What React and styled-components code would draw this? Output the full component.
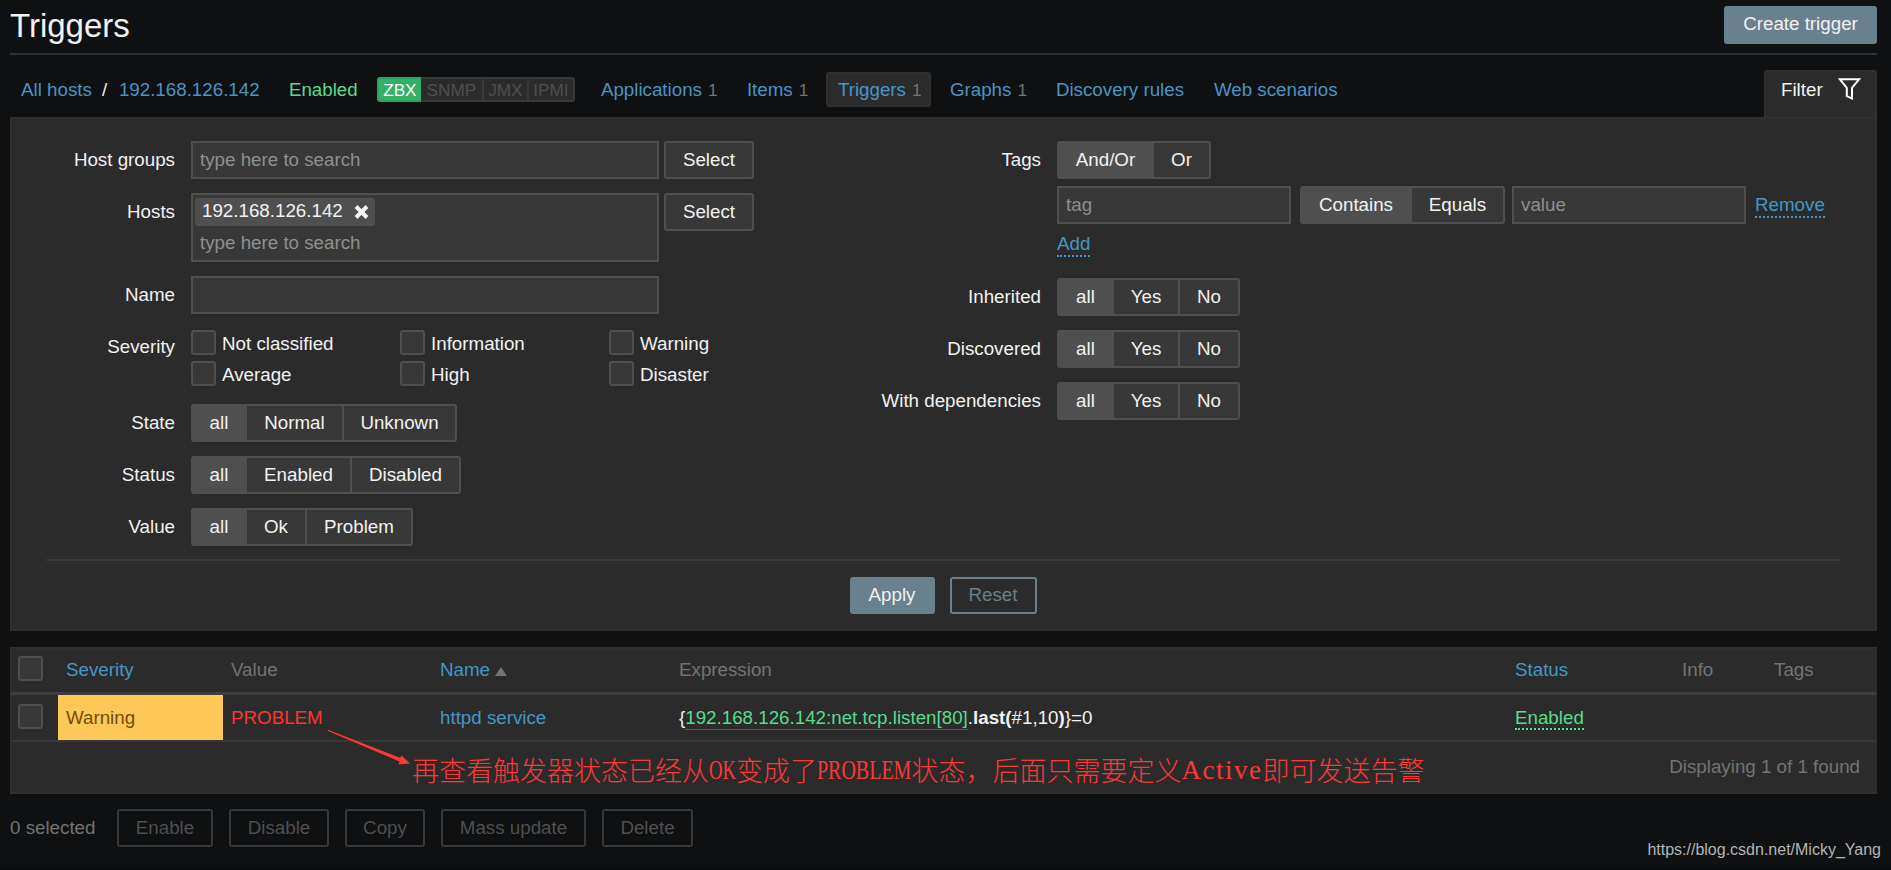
import React from 'react';
import styled, { createGlobalStyle, css } from 'styled-components';

const GlobalStyle = createGlobalStyle`
  *, *::before, *::after { box-sizing: border-box; }
  body {
    margin: 0;
    background: #0e1012;
    color: #f2f2f2;
    font: 18.75px/22px "Liberation Sans", Arial, sans-serif;
    overflow: hidden;
  }
  button, input { font: inherit; color: inherit; margin: 0; }
`;

const Page = styled.div`
  position: relative;
  height: 870px;
  padding: 0 14px 0 10px;
  border-bottom: 1px solid #070a0c;
`;

const Header = styled.header`
  display: flex;
  justify-content: space-between;
  align-items: flex-start;
  height: 55px;
  padding-top: 6px;
  border-bottom: 2px solid #303030;
`;

const Title = styled.h1`
  margin: 1px 0 0;
  font-size: 33px;
  line-height: 38px;
  font-weight: 400;
`;

const Button = styled.button`
  width: ${(p) => p.$w}px;
  height: ${(p) => p.$h || 38}px;
  padding: ${(p) => (p.$kind === 'primary' || p.$kind === 'outline' ? '0 0 2px' : '0')};
  border: 2px solid #4f4f4f;
  border-radius: 3px;
  background: #383838;
  color: #f2f2f2;
  white-space: nowrap;
  ${(p) => p.$kind === 'primary' && css`background: #69808d; border-color: #69808d;`}
  ${(p) => p.$kind === 'outline' && css`background: transparent; border-color: #69808d; color: #69808d;`}
  ${(p) => p.$kind === 'disabled' && css`background: transparent; border-color: #383838; color: #4f4f4f;`}
`;

const NavRow = styled.nav`
  display: flex;
  justify-content: space-between;
  align-items: flex-end;
  height: 62px;
`;

const NavItems = styled.div`
  display: flex;
  align-items: center;
  height: 45px;
  margin-bottom: 5px;
  padding-left: 11px;
`;

const Link = styled.a`
  color: #4796c4;
  white-space: nowrap;
  ${(p) => p.$dotted && css`
    margin-top: 2px;
    border-bottom: 2px dotted #4796c4;
  `}
`;

const Slash = styled.span`
  width: 27px;
  padding-left: 10px;
`;

const Crumb = styled.span`
  width: ${(p) => p.$w}px;
  color: ${(p) => p.$color || 'inherit'};
  white-space: nowrap;
`;

const Interfaces = styled.div`
  display: flex;
  width: 198px;
  height: 25px;
  margin-right: 14px;
  font-size: 17.2px;
  line-height: 21px;
`;

const Interface = styled.span`
  width: ${(p) => p.$w}px;
  padding-top: 1px;
  text-align: center;
  color: #4f4f4f;
  background: #2b2b2b;
  border: 2px solid #383838;
  border-left-width: 0;
  &:last-child { border-radius: 0 3px 3px 0; }
  ${(p) => p.$on && css`
    color: #fff;
    background: #34af67;
    border: 2px solid #2f9f5e;
    border-right: 0;
    border-radius: 3px 0 0 3px;
  `}
`;

const Tab = styled.a`
  width: ${(p) => p.$w}px;
  height: 35px;
  padding: 5px 0 0 10px;
  border: 2px solid transparent;
  border-radius: 3px;
  color: #4796c4;
  white-space: nowrap;
  ${(p) => p.$active && css`
    margin-right: 7px;
    background: #2b2b2b;
    border-color: #303030;
  `}
`;

const Count = styled.sup`
  margin-left: 6px;
  font-size: 17.2px;
  line-height: 1;
  vertical-align: baseline;
  color: #737373;
`;

const FilterTab = styled.div`
  display: flex;
  justify-content: space-between;
  width: 113px;
  height: 47px;
  padding: 7px 14px 0 15px;
  background: #2b2b2b;
  border: 2px solid #303030;
  border-bottom: 0;
  border-radius: 3px 3px 0 0;
`;

const FilterIcon = styled.svg`
  display: block;
  width: 23px;
  height: 22px;
  margin-top: -1px;
`;

const FilterPanel = styled.section`
  height: 514px;
  padding: 22px 35px 0 34px;
  background: #2b2b2b;
  border: 2px solid #303030;
`;

const FilterColumns = styled.div`
  display: grid;
  grid-template-columns: 866px 1fr;
  height: 420px;
  border-bottom: 2px solid #383838;
`;

const Form = styled.div`
  display: flex;
  flex-direction: column;
  gap: 14px;
`;

const Field = styled.div`
  display: flex;
  align-items: flex-start;
  height: ${(p) => p.$h || 38}px;
`;

const Label = styled.label`
  flex: none;
  width: ${(p) => p.$w}px;
  margin-right: 16px;
  padding-top: 8px;
  text-align: right;
`;

const WideLabel = styled(Label)`
  width: 170px;
  margin-left: -41px;
`;

const TextInput = styled.input`
  width: ${(p) => p.$w}px;
  height: 38px;
  padding: 0 7px;
  background: #383838;
  border: 2px solid #4f4f4f;
  border-radius: 0;
  outline: 0;
  &::placeholder { color: #8f8f8f; opacity: 1; }
`;

const MultiSelect = styled.div`
  width: 468px;
  height: 69px;
  padding: 3px 2px;
  background: #383838;
  border: 2px solid #4f4f4f;
  color: #8f8f8f;
`;

const Chip = styled.span`
  display: flex;
  align-items: center;
  gap: 11px;
  width: 180px;
  height: 28px;
  padding: 0 0 2px 7px;
  background: #4f4f4f;
  border-radius: 3px;
  color: #f2f2f2;
`;

const ChipClose = styled.svg`
  display: block;
  width: 15px;
  height: 14px;
  margin-top: 1px;
`;

const Placeholder = styled.div`
  padding: 6px 0 0 5px;
`;

const SegmentGroup = styled.div`
  display: flex;
  height: 38px;
  border: 2px solid #4f4f4f;
  border-radius: 3px;
  background: #383838;
  flex: none;
`;

const Segment = styled.span`
  width: ${(p) => p.$w}px;
  padding-top: 6px;
  text-align: center;
  background: ${(p) => (p.$on ? '#4f4f4f' : 'transparent')};
  border-right: 2px solid #4f4f4f;
  &:last-child { border-right: 0; }
`;

const CheckGrid = styled.div`
  display: grid;
  grid-template-columns: repeat(3, 209px);
  grid-auto-rows: 31px;
  padding-top: 2px;
`;

const CheckItem = styled.label`
  display: flex;
  gap: 6px;
  line-height: 27px;
`;

const Box = styled.span`
  display: block;
  flex: none;
  width: 25px;
  height: 25px;
  background: #383838;
  border: 2px solid #4f4f4f;
  border-radius: 3px;
`;

const TagArea = styled.div`
  display: flex;
  flex-direction: column;
  align-items: flex-start;
  gap: 7px;
`;

const TagRow = styled.div`
  display: flex;
  align-items: center;
`;

const Gap = styled.span`
  width: ${(p) => p.$w}px;
`;

const FilterActions = styled.div`
  display: flex;
  justify-content: center;
  gap: 15px;
  padding-top: 16px;
`;

const TableFrame = styled.section`
  height: 147px;
  margin-top: 16px;
  background: #2b2b2b;
  border: 2px solid #303030;
  border-left-width: 1px;
  border-right-width: 1px;
`;

const Row = styled.div`
  display: grid;
  grid-template-columns: 47px 165px 209px 239px 836px 167px 92px 1fr;
  height: ${(p) => (p.$head ? 46 : 47)}px;
  border-bottom: ${(p) => (p.$head ? '3px solid #3d3d3d' : '2px solid #383838')};
  color: ${(p) => (p.$head ? '#737373' : '#f2f2f2')};
  line-height: ${(p) => (p.$head ? 20 : 23)}px;
`;

const Cell = styled.div`
  padding: 11px 0 0 8px;
  white-space: nowrap;
  color: ${(p) => p.$color || 'inherit'};
  background: ${(p) => p.$bg || 'transparent'};
`;

const CheckCell = styled.div`
  padding: ${(p) => p.$top}px 0 0 7px;
`;

const SortArrow = styled.span`
  display: inline-block;
  margin-left: 5px;
  border: 6.5px solid transparent;
  border-top: 0;
  border-bottom: 9px solid #737373;
`;

const ItemLink = styled.span`
  padding-bottom: 1px;
  color: #59db8f;
  border-bottom: 1px solid #4b5b63;
`;

const StatusLink = styled.span`
  color: #59db8f;
  border-bottom: 2px dotted #59db8f;
`;

const TableFooter = styled.div`
  padding: 14px 16px 0 0;
  text-align: right;
  color: #737373;
`;

const ActionBar = styled.footer`
  display: flex;
  gap: 16px;
  padding-top: 15px;
`;

const Selected = styled.span`
  width: 91px;
  padding-top: 8px;
  color: #737373;
  white-space: nowrap;
`;

const Arrow = styled.svg`
  position: absolute;
  left: 324px;
  top: 726px;
  width: 90px;
  height: 42px;
`;

const Note = styled.div`
  position: absolute;
  left: 412px;
  top: 750px;
  display: flex;
  font: 300 27px/40px "Noto Sans CJK SC", sans-serif;
  color: #fb3838;
  white-space: nowrap;
`;

const Latin = styled.span`
  width: ${(p) => p.$n * 13.5}px;
  font-family: "Liberation Serif", serif;
  letter-spacing: ${(p) => p.$spacing || 0}px;
  transform: scaleX(${(p) => p.$scale || 1});
  transform-origin: 0 0;
`;

const Watermark = styled.div`
  position: absolute;
  right: 10px;
  top: 840px;
  font-size: 16px;
  line-height: 20px;
  color: #b4b5b6;
`;

const Segments = ({ items }) => (
  <SegmentGroup>
    {items.map(([text, w], i) => (
      <Segment key={text} $w={w} $on={i === 0}>{text}</Segment>
    ))}
  </SegmentGroup>
);

const yesNo = [['all', 55], ['Yes', 66], ['No', 58]];
const severities = ['Not classified', 'Information', 'Warning', 'Average', 'High', 'Disaster'];

export default function App() {
  return (
    <Page>
      <GlobalStyle />
      <Header>
        <Title>Triggers</Title>
        <Button $kind="primary" $w={153}>Create trigger</Button>
      </Header>

      <NavRow>
        <NavItems>
          <Link>All hosts</Link>
          <Slash>/</Slash>
          <Crumb $w={170} $color="#4796c4">192.168.126.142</Crumb>
          <Crumb $w={88} $color="#59db8f">Enabled</Crumb>
          <Interfaces>
            <Interface $w={44} $on>ZBX</Interface>
            <Interface $w={63}>SNMP</Interface>
            <Interface $w={45}>JMX</Interface>
            <Interface $w={46}>IPMI</Interface>
          </Interfaces>
          <Tab $w={146}>Applications<Count>1</Count></Tab>
          <Tab $w={91}>Items<Count>1</Count></Tab>
          <Tab $w={105} $active>Triggers<Count>1</Count></Tab>
          <Tab $w={106}>Graphs<Count>1</Count></Tab>
          <Tab $w={158}>Discovery rules</Tab>
          <Tab $w={150}>Web scenarios</Tab>
        </NavItems>
        <FilterTab>
          Filter
          <FilterIcon viewBox="0 0 23 22" fill="none" stroke="#fff" strokeWidth="2">
            <path d="M1.8 1.2H21.2L14 9.8V20.4L8.8 18.2V9.8Z" />
          </FilterIcon>
        </FilterTab>
      </NavRow>

      <FilterPanel>
        <FilterColumns>
          <Form>
            <Field>
              <Label $w={129}>Host groups</Label>
              <TextInput $w={468} placeholder="type here to search" />
              <Gap $w={5} />
              <Button $w={90}>Select</Button>
            </Field>
            <Field $h={69}>
              <Label $w={129}>Hosts</Label>
              <MultiSelect>
                <Chip>
                  192.168.126.142
                  <ChipClose viewBox="0 0 15 14" stroke="#f2f2f2" strokeWidth="4">
                    <path d="M2 1.5L13 12.5M13 1.5L2 12.5" />
                  </ChipClose>
                </Chip>
                <Placeholder>type here to search</Placeholder>
              </MultiSelect>
              <Gap $w={5} />
              <Button $w={90}>Select</Button>
            </Field>
            <Field>
              <Label $w={129}>Name</Label>
              <TextInput $w={468} />
            </Field>
            <Field $h={62}>
              <Label $w={129}>Severity</Label>
              <CheckGrid>
                {severities.map((t) => (
                  <CheckItem key={t}><Box />{t}</CheckItem>
                ))}
              </CheckGrid>
            </Field>
            <Field>
              <Label $w={129}>State</Label>
              <Segments items={[['all', 54], ['Normal', 97], ['Unknown', 111]]} />
            </Field>
            <Field>
              <Label $w={129}>Status</Label>
              <Segments items={[['all', 54], ['Enabled', 105], ['Disabled', 107]]} />
            </Field>
            <Field>
              <Label $w={129}>Value</Label>
              <Segments items={[['all', 54], ['Ok', 60], ['Problem', 104]]} />
            </Field>
          </Form>

          <Form>
            <Field $h={123}>
              <Label $w={129}>Tags</Label>
              <TagArea>
                <Segments items={[['And/Or', 95], ['Or', 55]]} />
                <TagRow>
                  <TextInput $w={234} placeholder="tag" />
                  <Gap $w={9} />
                  <Segments items={[['Contains', 110], ['Equals', 91]]} />
                  <Gap $w={7} />
                  <TextInput $w={234} placeholder="value" />
                  <Gap $w={9} />
                  <Link $dotted>Remove</Link>
                </TagRow>
                <Link $dotted>Add</Link>
              </TagArea>
            </Field>
            <Field>
              <Label $w={129}>Inherited</Label>
              <Segments items={yesNo} />
            </Field>
            <Field>
              <Label $w={129}>Discovered</Label>
              <Segments items={yesNo} />
            </Field>
            <Field>
              <WideLabel>With dependencies</WideLabel>
              <Segments items={yesNo} />
            </Field>
          </Form>
        </FilterColumns>
        <FilterActions>
          <Button $kind="primary" $w={85} $h={37}>Apply</Button>
          <Button $kind="outline" $w={87} $h={37}>Reset</Button>
        </FilterActions>
      </FilterPanel>

      <TableFrame>
        <Row $head>
          <CheckCell $top={7}><Box /></CheckCell>
          <Cell $color="#4796c4">Severity</Cell>
          <Cell>Value</Cell>
          <Cell $color="#4796c4">Name<SortArrow /></Cell>
          <Cell>Expression</Cell>
          <Cell $color="#4796c4">Status</Cell>
          <Cell>Info</Cell>
          <Cell>Tags</Cell>
        </Row>
        <Row>
          <CheckCell $top={9}><Box /></CheckCell>
          <Cell $bg="#ffc859" $color="#734d00">Warning</Cell>
          <Cell $color="#ff3333">PROBLEM</Cell>
          <Cell $color="#4796c4">httpd service</Cell>
          <Cell>
            {'{'}<ItemLink>192.168.126.142:net.tcp.listen[80]</ItemLink>.<b>last(</b>#1,10<b>)</b>{'}=0'}
          </Cell>
          <Cell><StatusLink>Enabled</StatusLink></Cell>
          <Cell />
          <Cell />
        </Row>
        <TableFooter>Displaying 1 of 1 found</TableFooter>
      </TableFrame>

      <ActionBar>
        <Selected>0 selected</Selected>
        <Button $kind="disabled" $w={96}>Enable</Button>
        <Button $kind="disabled" $w={100}>Disable</Button>
        <Button $kind="disabled" $w={80}>Copy</Button>
        <Button $kind="disabled" $w={145}>Mass update</Button>
        <Button $kind="disabled" $w={91}>Delete</Button>
      </ActionBar>

      <Arrow viewBox="0 0 90 42" fill="#fb3838">
        <path d="M4 3.8L76 31.8L77.5 29.5L86 37.5L74.5 38.5L75.5 35.5L4 5Z" />
      </Arrow>
      <Note>
        再查看触发器状态已经从<Latin $n={2} $scale={0.69}>OK</Latin>
        变成了<Latin $n={7} $scale={0.74}>PROBLEM</Latin>
        状态，后面只需要定义<Latin $n={6} $spacing={1.5}>Active</Latin>即可发送告警
      </Note>
      <Watermark>https://blog.csdn.net/Micky_Yang</Watermark>
    </Page>
  );
}
